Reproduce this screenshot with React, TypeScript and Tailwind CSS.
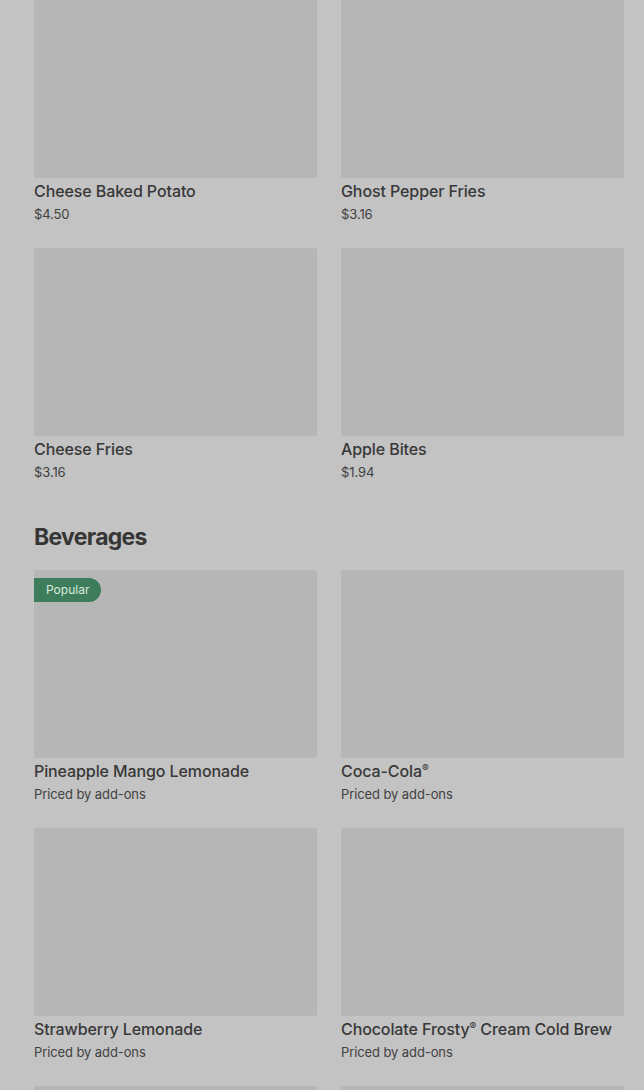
type Item = { name: string; price: string; popular?: boolean };

const sides: Item[] = [
  { name: "Cheese Baked Potato", price: "$4.50" },
  { name: "Ghost Pepper Fries", price: "$3.16" },
  { name: "Cheese Fries", price: "$3.16" },
  { name: "Apple Bites", price: "$1.94" },
];

const beverages: Item[] = [
  { name: "Pineapple Mango Lemonade", price: "Priced by add-ons", popular: true },
  { name: "Coca-Cola®", price: "Priced by add-ons" },
  { name: "Strawberry Lemonade", price: "Priced by add-ons" },
  { name: "Chocolate Frosty® Cream Cold Brew", price: "Priced by add-ons" },
];

function Name({ text }: { text: string }) {
  // the ® sits small and raised in the reference
  const parts = text.split("®");
  return (
    <>
      {parts.map((p, i) => (
        <span key={i}>
          {p}
          {i < parts.length - 1 && <sup className="text-[10px] leading-none top-[-5px]">®</sup>}
        </span>
      ))}
    </>
  );
}

function ItemCard({ item }: { item: Item }) {
  return (
    <div className="flex flex-col">
      <div className="relative h-[188px] bg-[#b6b6b6] rounded-[2px]">
        {item.popular && (
          <span className="absolute left-0 top-2 h-6 px-3 flex items-center rounded-r-full bg-[#3d7d5b] text-[12px] text-[#d9ecdf]">
            Popular
          </span>
        )}
      </div>
      <div className="mt-[1px] h-6 text-[16px] leading-6 font-medium tracking-[-0.1px] text-[#383838] whitespace-nowrap">
        <Name text={item.name} />
      </div>
      <div className="mt-[1px] text-[13px] leading-5 tracking-[-0.1px] text-[#414141]">{item.price}</div>
    </div>
  );
}

export default function App() {
  return (
    <div
      className="h-[1090px] overflow-hidden bg-[#c3c3c3] pl-[34px] pr-[20px]"
      style={{ fontFamily: "Inter, 'Noto Sans', sans-serif" }}
    >
      <div className="mt-[-10px] grid grid-cols-2 gap-x-6 gap-y-6">
        {sides.map((s) => (
          <ItemCard key={s.name} item={s} />
        ))}
      </div>

      <h2 className="mt-[39px] mb-[17px] text-[23px] leading-8 font-bold tracking-[-0.7px] text-[#363636]">
        Beverages
      </h2>

      <div className="grid grid-cols-2 gap-x-6 gap-y-6">
        {beverages.map((b) => (
          <ItemCard key={b.name} item={b} />
        ))}
        <div className="h-[188px] bg-[#b6b6b6] rounded-[2px]" />
        <div className="h-[188px] bg-[#b6b6b6] rounded-[2px]" />
      </div>
    </div>
  );
}
